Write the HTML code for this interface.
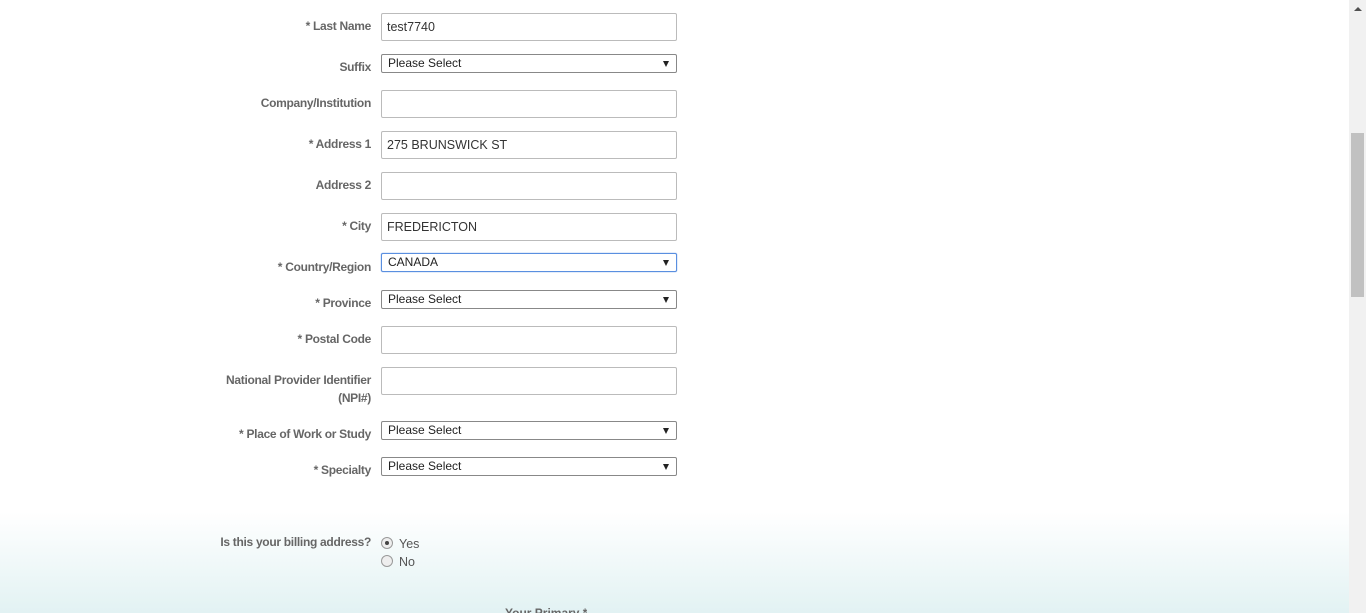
<!DOCTYPE html>
<html style="overflow:hidden;height:613px"><head><style>
body{margin:0;width:1366px;height:613px;overflow:hidden;background:#fff;font-family:"Liberation Sans",sans-serif;position:relative}
.grad{position:absolute;left:0;top:512px;width:1349px;height:101px;background:linear-gradient(#fff,#e2f2f3)}
.l{position:absolute;right:995px;font-size:12px;letter-spacing:-0.3px;font-weight:bold;color:#666;text-align:right;line-height:18px}
.i{position:absolute;left:381px;height:26px;border:1px solid #bbb;border-radius:2px;background:#fff;font-size:12.5px;color:#333;line-height:26px;padding-left:5px;width:289px}
.s{position:absolute;left:381px;height:17px;border:1px solid #888;border-radius:2px;background:#fff;font-size:12px;color:#222;line-height:16px;padding-left:6px;width:288px}
.s:after{content:"";position:absolute;right:7px;top:6px;border-left:3px solid transparent;border-right:3px solid transparent;border-top:6px solid #222}
.sb{position:absolute;left:1349px;top:0;width:17px;height:613px;background:#f1f1f1}
.th{position:absolute;left:1351px;top:133px;width:13px;height:164px;background:#c1c1c1}
.r{position:absolute;left:381px;width:12px;height:12px;border:1px solid #999;border-radius:50%;background:#eee;box-sizing:border-box}
.rt{position:absolute;left:399px;font-size:12.5px;color:#555}
</style></head><body>
<div class="grad"></div>
<div class="l" style="top:17px">* Last Name</div><div class="i" style="top:13px">test7740</div>
<div class="l" style="top:58px">Suffix</div><div class="s" style="top:54px">Please Select</div>
<div class="l" style="top:94px">Company/Institution</div><div class="i" style="top:90px"></div>
<div class="l" style="top:135px">* Address 1</div><div class="i" style="top:131px">275 BRUNSWICK ST</div>
<div class="l" style="top:176px">Address 2</div><div class="i" style="top:172px"></div>
<div class="l" style="top:217px">* City</div><div class="i" style="top:213px">FREDERICTON</div>
<div class="l" style="top:258px">* Country/Region</div><div class="s" style="top:253px;border-color:#5a8fe0;box-shadow:0 0 1px #5a8fe0">CANADA</div>
<div class="l" style="top:294px">* Province</div><div class="s" style="top:290px">Please Select</div>
<div class="l" style="top:330px">* Postal Code</div><div class="i" style="top:326px"></div>
<div class="l" style="top:371px">National Provider Identifier<br>(NPI#)</div><div class="i" style="top:367px"></div>
<div class="l" style="top:425px">* Place of Work or Study</div><div class="s" style="top:421px">Please Select</div>
<div class="l" style="top:461px">* Specialty</div><div class="s" style="top:457px">Please Select</div>
<div class="l" style="top:533px">Is this your billing address?</div>
<div class="r" style="top:537px"><div style="position:absolute;left:3px;top:3px;width:4px;height:4px;border-radius:50%;background:#444"></div></div><div class="rt" style="top:537px">Yes</div>
<div class="r" style="top:555px"></div><div class="rt" style="top:555px">No</div>
<div style="position:absolute;left:505px;top:604px;height:9px;overflow:hidden;font-size:12px;line-height:18px;font-weight:bold;color:#666">Your Primary *</div>
<div class="sb"></div><div class="th"></div>
<div style="position:absolute;left:1354px;top:7px;border-left:4px solid transparent;border-right:4px solid transparent;border-bottom:4px solid #505050"></div>
</body></html>
